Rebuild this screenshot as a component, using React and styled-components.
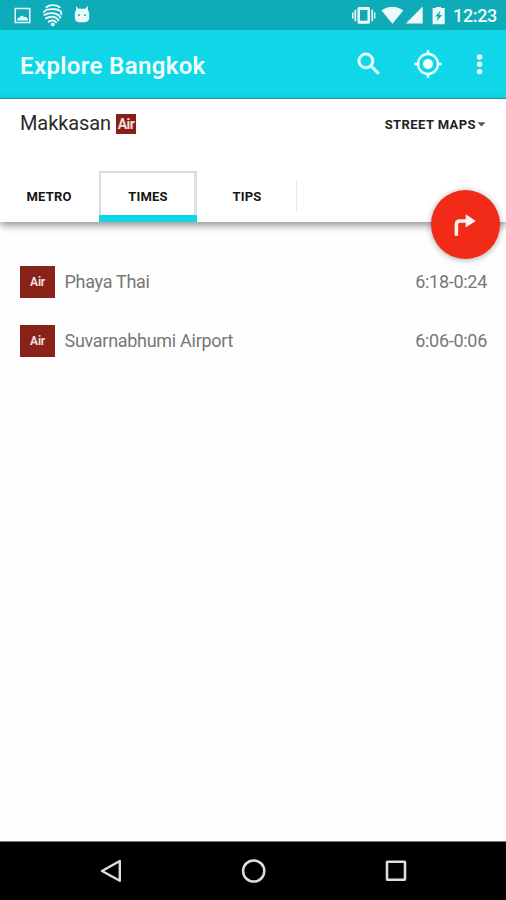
import React from 'react';
import styled, {createGlobalStyle} from 'styled-components';

const GlobalStyle = createGlobalStyle`
  * {
    box-sizing: border-box;
  }
  body {
    margin: 0;
    background: #fff;
    font-family: Roboto, 'Liberation Sans', sans-serif;
  }
  button {
    border: 0;
    padding: 0;
    background: none;
    font-family: inherit;
    color: inherit;
  }
`;

const tabs = ['Metro', 'Times', 'Tips'];
const departures = [
    {id: 1, line: 'Air', station: 'Phaya Thai', hours: '6:18-0:24'},
    {id: 2, line: 'Air', station: 'Suvarnabhumi Airport', hours: '6:06-0:06'}
];

const StatusBar = () => (
    <StatusWrapper>
        <svg width="86" height="30" viewBox="8 0 86 30" fill="#e9fafb">
            <path fillRule="evenodd" d="M14.5 7.7H30.5V23.2H14.5ZM16 9.2V21.7H29V9.2Z"/>
            <path d="M17.2 20.5V18.5L19 17.7 21 16 22.5 15.4 24 17.2 26 16.8 28 19V20.5Z"/>
            <g fill="none" stroke="#e9fafb" strokeWidth="1.9" strokeLinecap="round">
                <path d="M46.3 7.2C49.5 4.4 56.5 4.4 59.7 7.2"/>
                <path d="M44 12C46 8.4 52 9 55 9.2C58.5 9.5 62.2 11.3 61.2 14.2"/>
                <path d="M44.4 14.8C50 12 57.5 12.6 60.3 17.4"/>
                <path d="M45.8 18.4C51 15.4 56.6 16.6 58.4 20.4"/>
                <path d="M48.8 21.7Q53.3 19.2 56 22.2"/>
            </g>
            <circle cx="52.8" cy="24.4" r="1.9"/>
            <path fillRule="evenodd" d="M76 6L78.3 8.8H85.3L87.9 6V10Q89.2 11.5 89.2 14.2V17Q89.2 22.2 84.5 22.2H79.3Q74.8 22.2 74.8 17V14.2Q74.8 11.5 76 10ZM78.2 14.3V16H79.8V14.3ZM84.2 14.3V16H85.8V14.3Z"/>
        </svg>
        <StatusGroup>
            <svg width="98" height="30" viewBox="350 0 98 30" fill="#edfbfb">
                <path fillRule="evenodd" d="M359 7H368.5Q370 7 370 8.5V22.3Q370 23.8 368.5 23.8H359Q357.5 23.8 357.5 22.3V8.5Q357.5 7 359 7ZM360 10V20.8H367.5V10Z"/>
                <path d="M354.5 9.8H356.2V21.2H354.5ZM352 12.5H353.6V18.5H352ZM371.4 9.8H373.1V21.2H371.4ZM374 12.5H375.4V18.5H374Z"/>
                <path d="M381.5 10.5Q392.3 3 403.3 10.5L392.4 23.7ZM422.7 6.5V23.4H405.7Z"/>
                <path fillRule="evenodd" d="M436 8V7H441V8H444.7V24.3H432.6V8ZM440.5 10.5L435 16.6H438L436.6 21.3L442.2 15.1H439.2Z"/>
            </svg>
            <Clock>12:23</Clock>
        </StatusGroup>
    </StatusWrapper>
);

const Toolbar = () => (
    <ToolbarWrapper>
        <Title>Explore Bangkok</Title>
        <IconButton size={30} aria-label="search">
            <svg width="30" height="30" viewBox="0 0 24 24" fill="#effdfe" stroke="#effdfe" strokeWidth="0.4">
                <path d="M15.5 14h-.79l-.28-.27A6.47 6.47 0 0 0 16 9.5 6.5 6.5 0 1 0 9.5 16c1.61 0 3.09-.59 4.23-1.57l.27.28v.79l5 4.99L20.49 19l-4.99-5zm-6 0C7.01 14 5 11.99 5 9.5S7.01 5 9.5 5 14 7.01 14 9.5 11.99 14 9.5 14z"/>
            </svg>
        </IconButton>
        <IconButton size={30} gap={29} aria-label="my location">
            <svg width="30" height="30" viewBox="0 0 24 24" fill="#effdfe">
                <path d="M12 8c-2.21 0-4 1.79-4 4s1.79 4 4 4 4-1.79 4-4-1.79-4-4-4zm8.94 3A8.994 8.994 0 0 0 13 3.06V1h-2v2.06A8.994 8.994 0 0 0 3.06 11H1v2h2.06A8.994 8.994 0 0 0 11 20.94V23h2v-2.06A8.994 8.994 0 0 0 20.94 13H23v-2h-2.06zM12 19c-3.87 0-7-3.13-7-7s3.13-7 7-7 7 3.13 7 7-3.13 7-7 7z"/>
            </svg>
        </IconButton>
        <IconButton size={30} gap={22} aria-label="more">
            <svg width="30" height="30" viewBox="0 0 30 30" fill="#effdfe">
                <circle cx="14.6" cy="8" r="2.7"/>
                <circle cx="14.6" cy="15.3" r="2.7"/>
                <circle cx="14.6" cy="22.6" r="2.7"/>
            </svg>
        </IconButton>
    </ToolbarWrapper>
);

const StationHeader = () => (
    <HeaderWrapper>
        <StationRow>
            <StationName>Makkasan</StationName>
            <SmallBadge>Air</SmallBadge>
            <MapsButton>
                Street maps
                <svg width="9" height="5" viewBox="0 0 9 5" fill="#555">
                    <path d="M0.5 0.3H8.5L4.5 4.5Z"/>
                </svg>
            </MapsButton>
        </StationRow>
        <TabList>
            {tabs.map(tab => (
                <Tab key={tab} $active={tab === 'Times'}>{tab}</Tab>
            ))}
            <TabDivider/>
        </TabList>
        <Fab aria-label="directions">
            <svg width="24" height="24" viewBox="0 0 24 24">
                <path d="M3.4 22.7V11.5Q3.4 8 7 8H14" fill="none" stroke="#fff3f0" strokeWidth="3.5"/>
                <path d="M12.7 1.2L22.8 7.9 12.7 14.6Z" fill="#fff3f0"/>
            </svg>
        </Fab>
    </HeaderWrapper>
);

const App = () => {
    return (
        <Screen>
            <GlobalStyle/>
            <StatusBar/>
            <Toolbar/>
            <StationHeader/>
            <DepartureList>
                {departures.map(item => (
                    <Departure key={item.id}>
                        <LineBadge>{item.line}</LineBadge>
                        <Station>{item.station}</Station>
                        <Hours>{item.hours}</Hours>
                    </Departure>
                ))}
            </DepartureList>
            <NavBar>
                <NavButton aria-label="back">
                    <svg width="26" height="28" viewBox="0 0 26 28">
                        <path d="M20.8 4V23.8L3 14Z" fill="none" stroke="#dedede" strokeWidth="2.4" strokeLinejoin="round"/>
                    </svg>
                </NavButton>
                <NavButton aria-label="home">
                    <svg width="26" height="28" viewBox="0 0 26 28">
                        <circle cx="12.7" cy="14" r="10.6" fill="none" stroke="#dedede" strokeWidth="2.5"/>
                    </svg>
                </NavButton>
                <NavButton aria-label="recent apps">
                    <svg width="26" height="28" viewBox="0 0 26 28">
                        <rect x="4" y="4.7" width="18" height="18" rx="0.5" fill="none" stroke="#dedede" strokeWidth="2.6"/>
                    </svg>
                </NavButton>
            </NavBar>
        </Screen>
    );
};

const Screen = styled.div`
  display: flex;
  flex-direction: column;
  width: 506px;
  height: 900px;
  overflow: hidden;
  background: #fefefe;
`;
const StatusWrapper = styled.div`
  display: flex;
  justify-content: space-between;
  flex: none;
  height: 30px;
  padding: 0 9px 0 8px;
  background: #0eacb9;
  svg {
    display: block;
  }
`;
const StatusGroup = styled.div`
  display: flex;
`;
const Clock = styled.span`
  width: 49px;
  padding-left: 5px;
  line-height: 32px;
  font-size: 18px;
  font-weight: 500;
  letter-spacing: -0.35px;
  color: #edfbfb;
  white-space: nowrap;
`;
const ToolbarWrapper = styled.header`
  display: flex;
  align-items: center;
  flex: none;
  height: 69px;
  padding: 0 11px 0 20px;
  background: #10d7e8;
  border-bottom: 1px solid #16a9b7;
`;
const Title = styled.h1`
  flex: 1;
  margin: 3px 0 0;
  font-size: 24px;
  font-weight: 600;
  letter-spacing: 0.35px;
  color: #effdfe;
`;
const IconButton = styled.button`
  width: ${props => props.size}px;
  height: ${props => props.size}px;
  margin-left: ${props => props.gap || 0}px;
  svg {
    display: block;
  }
`;
const HeaderWrapper = styled.section`
  position: relative;
  display: flex;
  flex-direction: column;
  justify-content: space-between;
  flex: none;
  height: 123px;
  background: #fff;
  box-shadow: 0 3px 8px rgba(0, 0, 0, 0.45);
`;
const StationRow = styled.div`
  display: flex;
  align-items: center;
  height: 49px;
  padding: 0 20px;
`;
const StationName = styled.h2`
  width: 96px;
  margin: 0 0 1px;
  font-size: 20px;
  font-weight: 400;
  letter-spacing: -0.1px;
  color: #2b2b2b;
`;
const SmallBadge = styled.span`
  display: flex;
  align-items: center;
  justify-content: center;
  width: 20px;
  height: 20px;
  font-size: 14px;
  font-weight: 700;
  letter-spacing: -0.5px;
  color: #f2dedc;
  background: #8a1f1a;
`;
const MapsButton = styled.button`
  display: flex;
  align-items: center;
  gap: 1px;
  margin: 1px 0 0 auto;
  font-size: 13px;
  font-weight: 700;
  letter-spacing: 0.42px;
  text-transform: uppercase;
  color: #222;
`;
const TabList = styled.nav`
  display: flex;
  height: 51px;
`;
const Tab = styled.button`
  width: 99px;
  padding-right: 1px;
  font-size: 13px;
  font-weight: 700;
  letter-spacing: 0.2px;
  text-transform: uppercase;
  color: #151515;
  ${props => props.$active && `
    width: 98px;
    margin-right: 1px;
    padding: 0;
    background:
      linear-gradient(#10d7e8, #10d7e8) bottom / 100% 7px no-repeat,
      linear-gradient(#dcdcdc, #dcdcdc) top / 100% 2px no-repeat,
      linear-gradient(#dcdcdc, #dcdcdc) left / 2px 100% no-repeat,
      linear-gradient(#e0e0e0, #e0e0e0) right / 3px 100% no-repeat;
  `}
`;
const TabDivider = styled.span`
  width: 1px;
  height: 32px;
  margin: 9px 0 0 -1px;
  background: #e8e8e8;
`;
// floats over the lower edge of the header
const Fab = styled.button`
  position: absolute;
  right: 6px;
  bottom: -37px;
  display: flex;
  align-items: center;
  justify-content: center;
  width: 69px;
  height: 69px;
  padding-right: 2px;
  border-radius: 50%;
  background: #f22b18;
  box-shadow: 0 1px 6px rgba(0, 0, 0, 0.35);
`;
const DepartureList = styled.ul`
  flex: 1;
  margin: 0;
  padding: 30px 19px 0 20px;
  list-style: none;
`;
const Departure = styled.li`
  display: flex;
  align-items: center;
  height: 59px;
  font-size: 18px;
  letter-spacing: -0.29px;
  color: #777;
`;
const LineBadge = styled.span`
  display: flex;
  align-items: center;
  justify-content: center;
  width: 35px;
  height: 32px;
  margin-right: 9.5px;
  font-size: 12px;
  font-weight: 700;
  color: #f2dedc;
  background: #8a2219;
`;
const Station = styled.span`
  flex: 1;
`;
const Hours = styled.span`
  text-align: right;
`;
const NavBar = styled.footer`
  display: flex;
  align-items: center;
  justify-content: center;
  gap: 116px;
  flex: none;
  height: 59px;
  padding-left: 2px;
  border-top: 1px solid #777;
  background: #000;
`;
const NavButton = styled.button`
  width: 26px;
  height: 28px;
  svg {
    display: block;
  }
`;
export default App;
